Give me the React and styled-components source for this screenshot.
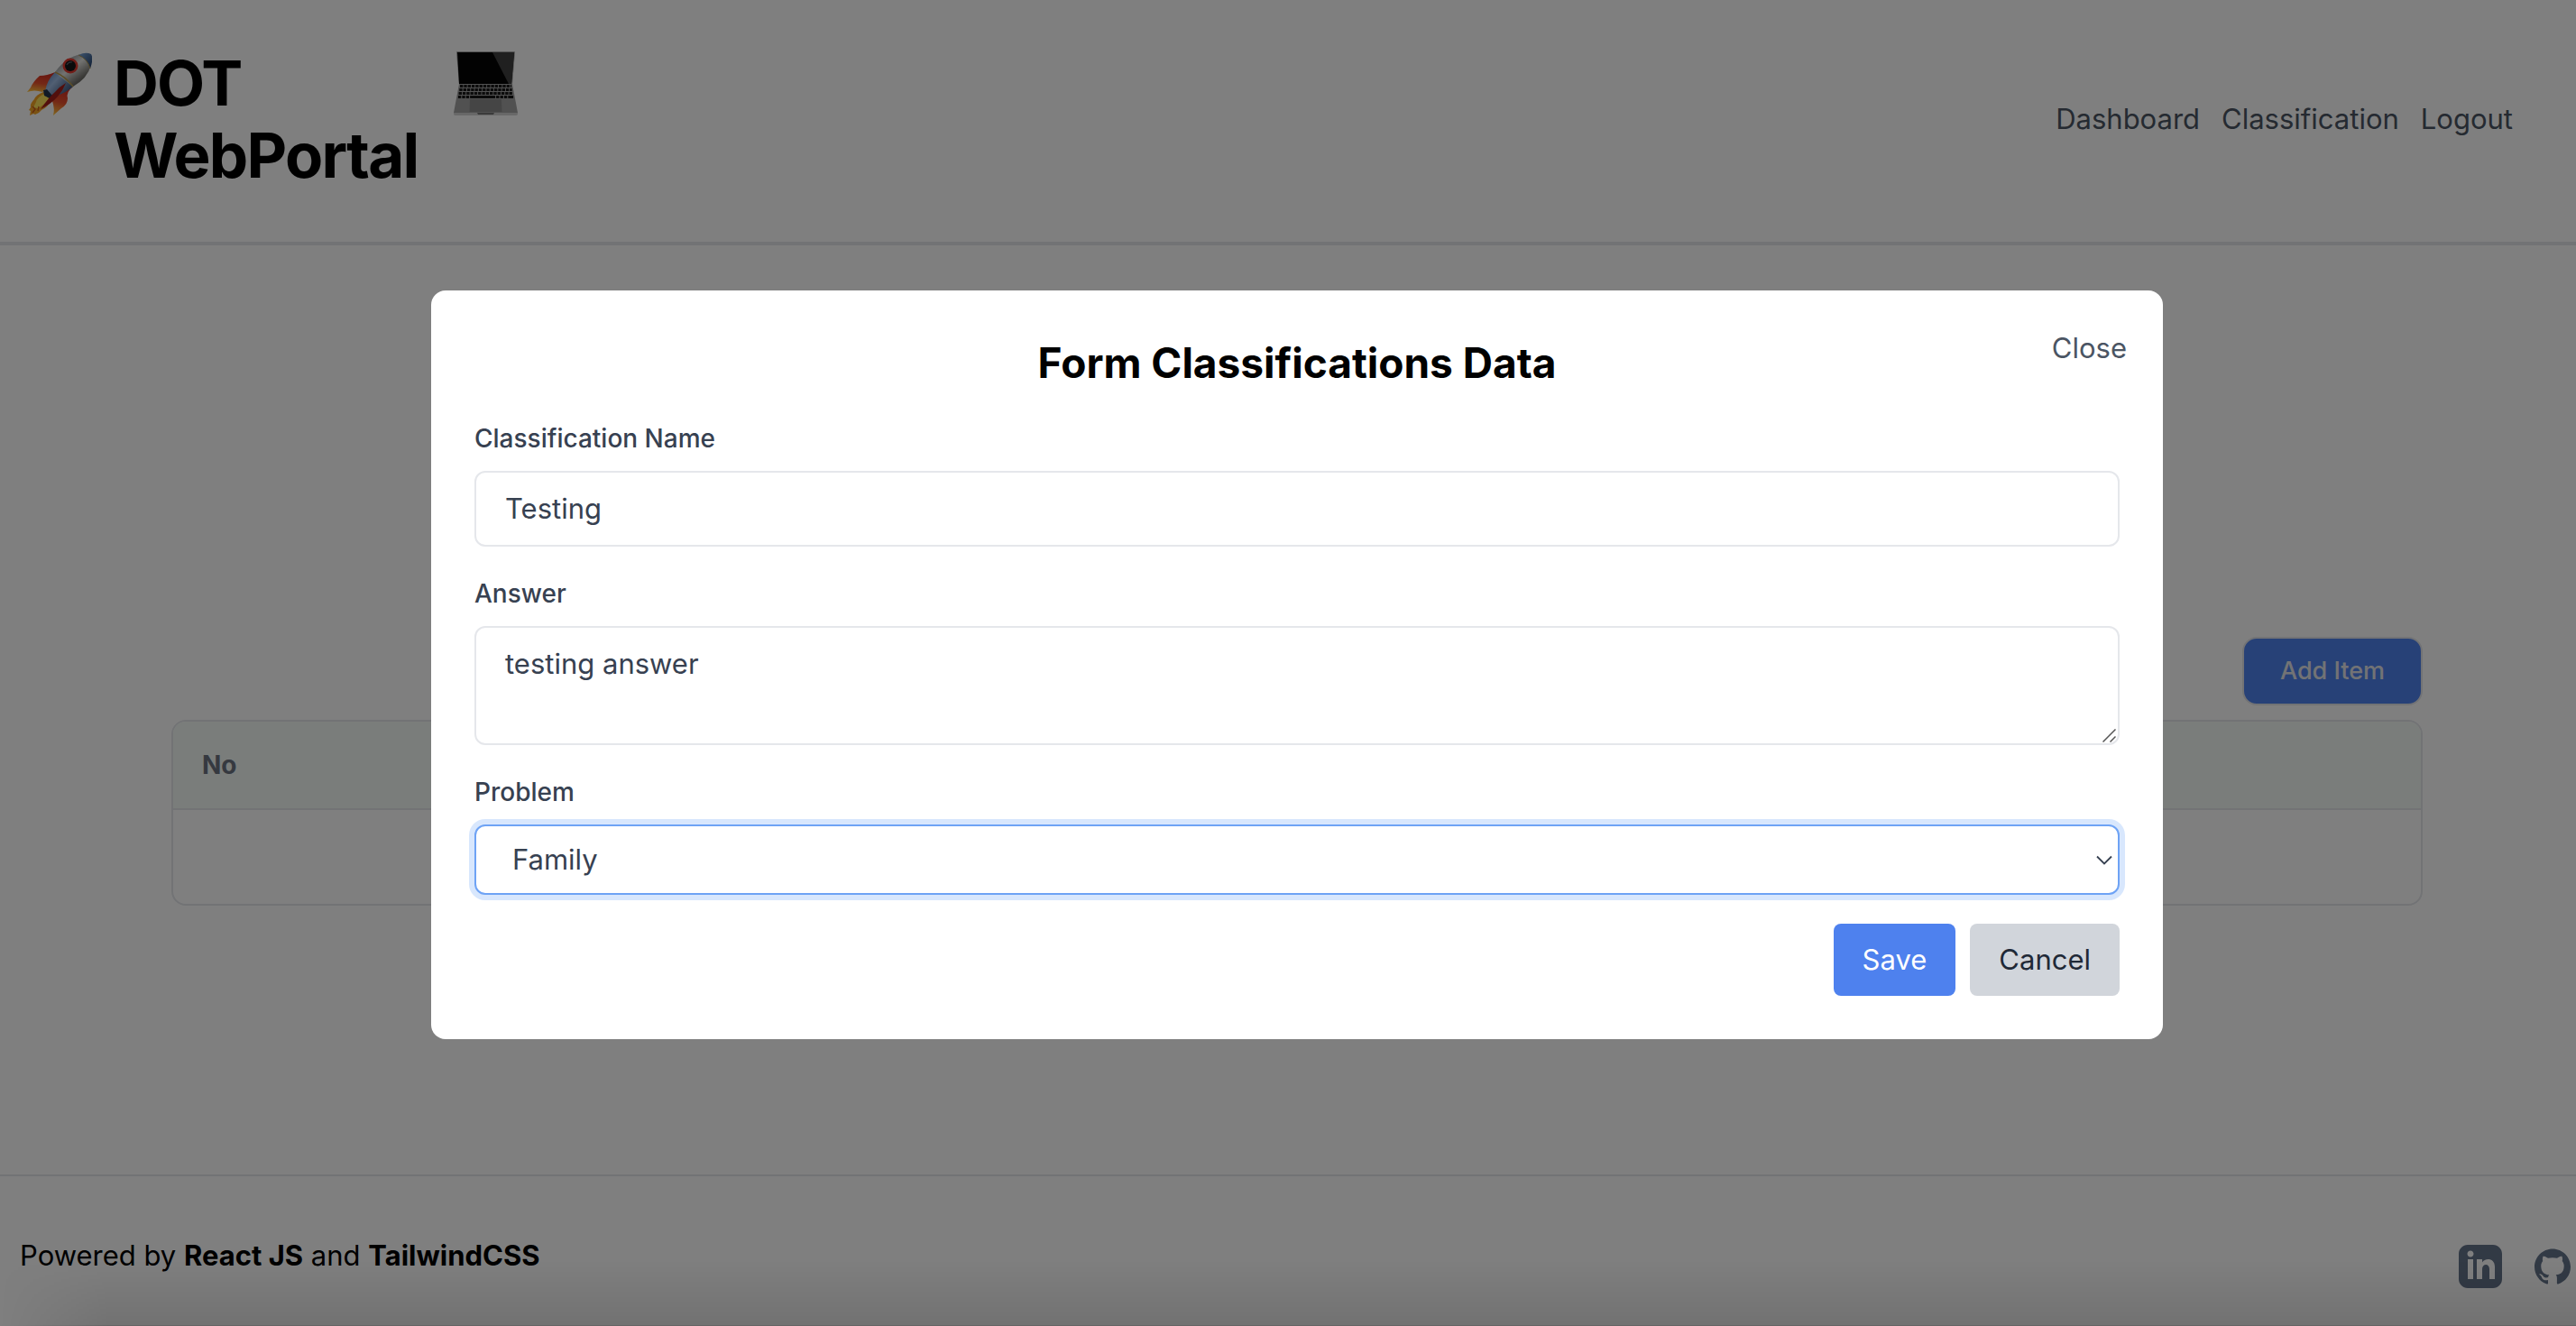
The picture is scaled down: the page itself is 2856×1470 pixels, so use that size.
import React from "react";
import styled, { createGlobalStyle } from "styled-components";

const GlobalStyle = createGlobalStyle`
  *, *::before, *::after { box-sizing: border-box; }
  body {
    margin: 0;
    background: #ffffff;
    color: #000000;
    font-family: Inter, "Liberation Sans", sans-serif;
    font-size: 31px;
    line-height: 48px;
  }
  h1, h2, p { margin: 0; }
  button, input, textarea, select { font: inherit; }
`;

const Page = styled.div`
  display: flex;
  flex-direction: column;
  min-height: 100vh;
`;

const Header = styled.header`
  display: flex;
  align-items: center;
  justify-content: space-between;
  padding: 52px 70px 56px 30px;
  border-bottom: 4px solid #e5e7eb;
`;

const Brand = styled.div`
  display: flex;
  align-items: flex-start;
`;

const BrandIcon = styled.svg`
  width: 72px;
  height: 72px;
  margin-top: 4px;
  flex: none;
`;

const BrandName = styled.h1`
  width: 400px;
  padding-left: 24px;
  font-size: 69px;
  font-weight: 700;
  line-height: 80px;
  letter-spacing: -0.025em;
`;

const Nav = styled.nav`
  display: flex;
  gap: 24px;
`;

const NavLink = styled.a`
  color: #4b5563;
  text-decoration: none;
`;

const Main = styled.main`
  display: flex;
  flex: 1;
  flex-direction: column;
  justify-content: center;
  padding: 0 170px 0 190px;
`;

const Section = styled.section`
  display: flex;
  flex-direction: column;
  gap: 16px;
  padding-top: 136px;
`;

const AddButton = styled.button`
  align-self: flex-end;
  padding: 16px 40px;
  border: 2px solid #e5e7eb;
  border-radius: 16px;
  background: #4f82ee;
  color: #e5e7eb;
  font-size: 27px;
  font-weight: 500;
  line-height: 40px;
`;

const TableFrame = styled.div`
  overflow: hidden;
  border: 2px solid #e5e7eb;
  border-radius: 16px;
`;

const Table = styled.table`
  width: 100%;
  border-collapse: separate;
  border-spacing: 0;
`;

const HeadCell = styled.th`
  padding: 28px 32px;
  border-bottom: 2px solid #e5e7eb;
  background: #f4faf7;
  color: #6b7280;
  font-size: 28px;
  font-weight: 700;
  line-height: 40px;
  text-align: left;
`;

const EmptyCell = styled.td`
  height: 104px;
`;

const Footer = styled.footer`
  display: flex;
  justify-content: space-between;
  align-items: flex-start;
  padding: 64px 0 42px 22px;
  border-top: 2px solid #e5e7eb;
`;

const Socials = styled.div`
  display: flex;
  align-items: center;
  gap: 36px;
  padding: 12px 6px 0 0;
`;

const SocialLink = styled.a`
  display: flex;
  color: #64748b;
`;

const SocialIcon = styled.svg`
  width: ${(p) => p.$size}px;
  height: ${(p) => p.$size}px;
  fill: currentColor;
`;

const Overlay = styled.div`
  position: fixed;
  inset: 0;
  display: flex;
  align-items: center;
  justify-content: center;
  padding: 4px 0 0 20px;
  background: rgba(0, 0, 0, 0.5);
`;

const EdgeShade = styled.div`
  position: fixed;
  inset: auto 0 0 0;
  height: 72px;
  border-bottom: 1px solid rgba(0, 0, 0, 0.2);
  background: linear-gradient(to bottom, rgba(0, 0, 0, 0), rgba(0, 0, 0, 0.1));
  mask-image: linear-gradient(to right, transparent, #000000 120px);
  pointer-events: none;
`;

const Dialog = styled.form`
  position: relative;
  display: flex;
  flex-direction: column;
  gap: 32px;
  width: 100%;
  max-width: 1920px;
  padding: 48px;
  border-radius: 16px;
  background: #ffffff;
`;

const DialogTitle = styled.h2`
  font-size: 46px;
  font-weight: 700;
  line-height: 64px;
  text-align: center;
`;

const CloseButton = styled.button`
  position: absolute;
  top: 40px;
  right: 40px;
  padding: 0;
  border: 0;
  background: none;
  color: #4b5563;
`;

const Field = styled.div`
  display: flex;
  flex-direction: column;
  gap: 16px;
`;

const Label = styled.label`
  color: #374151;
  font-size: 28px;
  font-weight: 500;
  line-height: 40px;
`;

const ControlBox = styled.div`
  position: relative;
  display: flex;
`;

const Input = styled.input`
  width: 100%;
  padding: 16px 32px;
  border: 2px solid #e5e7eb;
  border-radius: 12px;
  outline: 0;
  background: #ffffff;
  color: #374151;
  line-height: 48px;
`;

const TextArea = styled(Input)`
  display: block;
  resize: none;
`;

const Select = styled(Input)`
  appearance: none;
  height: 78px;
  padding: 0 40px;
  border-color: #6ea3f5;
  box-shadow: 0 0 0 6px #d8e7fd;
`;

const Grip = styled.svg`
  position: absolute;
  right: 4px;
  bottom: 3px;
  width: 15px;
  height: 15px;
  pointer-events: none;
`;

const Chevron = styled.svg`
  position: absolute;
  top: 34px;
  right: 8px;
  width: 18px;
  height: 12px;
  pointer-events: none;
`;

const Actions = styled.div`
  display: flex;
  justify-content: flex-end;
  gap: 16px;
`;

const ActionButton = styled.button`
  padding: 16px 32px;
  border: 0;
  border-radius: 8px;
  background: ${(p) => (p.$primary ? "#4e81ee" : "#d1d5db")};
  color: ${(p) => (p.$primary ? "#ffffff" : "#1f2937")};
`;

function Rocket() {
  return (
    <BrandIcon viewBox="0 0 72 72" aria-hidden="true">
      <defs>
        <linearGradient id="hull" x1="0.25" y1="0.15" x2="0.75" y2="0.75">
          <stop offset="0" stopColor="#8b9096" />
          <stop offset="0.45" stopColor="#e6e6e2" />
          <stop offset="1" stopColor="#6e6d68" />
        </linearGradient>
        <linearGradient id="tail" x1="0" y1="0" x2="1" y2="0.8">
          <stop offset="0" stopColor="#4a78b4" />
          <stop offset="0.4" stopColor="#a3bfe6" />
          <stop offset="1" stopColor="#2c4468" />
        </linearGradient>
        <linearGradient id="nose" x1="0" y1="0" x2="1" y2="1">
          <stop offset="0" stopColor="#7fa9dc" />
          <stop offset="1" stopColor="#1d3a66" />
        </linearGradient>
        <linearGradient id="fin" x1="0.5" y1="0" x2="0.3" y2="1">
          <stop offset="0" stopColor="#d02a20" />
          <stop offset="0.55" stopColor="#e8502c" />
          <stop offset="1" stopColor="#ffc13c" />
        </linearGradient>
      </defs>
      <path d="M31 24Q22 28 14 28Q7 34 4 41L0 46Q8 43 17 46L24 41Z" fill="url(#fin)" />
      <path d="M51 40Q43 46 45 53Q45 60 38 64L29 72Q31 65 28 56L33 49Z" fill="url(#fin)" />
      <path d="M18 46Q10 49 8 54Q3 59 4 63L2 66L4 67L3 72L7 70L9 71Q13 70 16 66Q23 63 26 56L27 50Z" fill="#f5a524" />
      <path d="M19 48Q11 52 10 57L7 63L12 64Q20 60 24 53Z" fill="#ffe25a" />
      <path d="M6 62L9 65L6 69M13 62L12 67" stroke="#c95a1c" strokeWidth="1.4" fill="none" />
      <path d="M31 24L51 40Q43 47 33 50Q27 53 20 45Q22 33 31 24Z" fill="url(#tail)" />
      <path d="M31 24Q43 7 60 4L71 16Q67 31 51 40Z" fill="url(#hull)" />
      <path d="M57 5Q65 1 71 4Q74 9 70 20Q68 10 57 5Z" fill="url(#nose)" />
      <path d="M31 24Q43 29 51 40" stroke="#b79b4f" strokeWidth="1.5" fill="none" />
      <path d="M57 5Q67 9 70 20" stroke="#ab914e" strokeWidth="1" fill="none" />
      <path d="M18 44L22 43L28 50L25 53L19 50Z" fill="#24334b" />
      <path d="M43 36Q36 40 31 46Q25 51 15 65Q27 59 34 51Q40 44 43 36Z" fill="#a51f1b" />
      <circle cx="48" cy="17" r="8.5" fill="#e23a30" />
      <circle cx="48" cy="17" r="6" fill="#151719" />
      <path d="M44 16Q46 12 50 13" stroke="#59616c" strokeWidth="1.2" fill="none" />
    </BrandIcon>
  );
}

function Laptop() {
  const rows = [38, 42, 46, 50];
  return (
    <BrandIcon viewBox="0 0 72 72" aria-hidden="true">
      <path d="M5 1H68Q69 1 69 2L66 38H7L4 2Q4 1 5 1Z" fill="#aaaaaa" />
      <path d="M5 2H68L65 37H7Z" fill="#050505" />
      <path d="M44 2H68L65 37H62Z" fill="#404040" />
      <path d="M7 37H66L72 69Q72 71 70 71H3Q1 71 1 69Z" fill="#a3a3a3" />
      <path d="M1 69H72V70Q72 72 70 72H3Q1 72 1 70Z" fill="#d0d0d0" />
      <path d="M27 69H46L45 71H28Z" fill="#777777" />
      {rows.map((y, i) => (
        <path
          key={y}
          d={`M${8 - i * 0.7} ${y + 1.5}H${65 + i * 0.7}`}
          stroke="#161616"
          strokeWidth="3"
          strokeDasharray={i === 3 ? "3.4 1 3.4 1 3.4 1 28 1" : "3.4 0.9"}
        />
      ))}
      <path d="M19 54H54L54.5 68H18.5Z" fill="#8b8b8b" />
    </BrandIcon>
  );
}

export default function App() {
  return (
    <>
      <GlobalStyle />
      <Page>
        <Header>
          <Brand>
            <Rocket />
            <BrandName>
              DOT
              <br />
              WebPortal
            </BrandName>
            <Laptop />
          </Brand>
          <Nav aria-label="Main">
            <NavLink href="#dashboard">Dashboard</NavLink>
            <NavLink href="#classification">Classification</NavLink>
            <NavLink href="#logout">Logout</NavLink>
          </Nav>
        </Header>

        <Main>
          <Section>
            <AddButton type="button">Add Item</AddButton>
            <TableFrame>
              <Table>
                <thead>
                  <tr>
                    <HeadCell scope="col">No</HeadCell>
                  </tr>
                </thead>
                <tbody>
                  <tr>
                    <EmptyCell />
                  </tr>
                </tbody>
              </Table>
            </TableFrame>
          </Section>
        </Main>

        <Footer>
          <p>
            Powered by <strong>React JS</strong> and <strong>TailwindCSS</strong>
          </p>
          <Socials>
            <SocialLink href="#linkedin" aria-label="LinkedIn">
              <SocialIcon $size={48} viewBox="0 0 24 24" aria-hidden="true">
                <path d="M19 0h-14c-2.761 0-5 2.239-5 5v14c0 2.761 2.239 5 5 5h14c2.762 0 5-2.239 5-5v-14c0-2.761-2.238-5-5-5zm-11 19h-3v-11h3v11zm-1.5-12.268c-.966 0-1.75-.79-1.75-1.764s.784-1.764 1.75-1.764 1.75.79 1.75 1.764-.783 1.764-1.75 1.764zm13.5 12.268h-3v-5.604c0-3.368-4-3.113-4 0v5.604h-3v-11h3v1.765c1.396-2.586 7-2.777 7 2.476v6.759z" />
              </SocialIcon>
            </SocialLink>
            <SocialLink href="#github" aria-label="GitHub">
              <SocialIcon $size={40} viewBox="0 0 24 24" aria-hidden="true">
                <path d="M12 .297c-6.63 0-12 5.373-12 12 0 5.303 3.438 9.8 8.205 11.385.6.113.82-.258.82-.577 0-.285-.01-1.04-.015-2.04-3.338.724-4.042-1.61-4.042-1.61C4.422 18.07 3.633 17.7 3.633 17.7c-1.087-.744.084-.729.084-.729 1.205.084 1.838 1.236 1.838 1.236 1.07 1.835 2.809 1.305 3.495.998.108-.776.417-1.305.76-1.605-2.665-.3-5.466-1.332-5.466-5.93 0-1.31.465-2.38 1.235-3.22-.135-.303-.54-1.523.105-3.176 0 0 1.005-.322 3.3 1.23.96-.267 1.98-.399 3-.405 1.02.006 2.04.138 3 .405 2.28-1.552 3.285-1.23 3.285-1.23.645 1.653.24 2.873.12 3.176.765.84 1.23 1.91 1.23 3.22 0 4.61-2.805 5.625-5.475 5.92.42.36.81 1.096.81 2.22 0 1.606-.015 2.896-.015 3.286 0 .315.21.69.825.57C20.565 22.092 24 17.592 24 12.297c0-6.627-5.373-12-12-12" />
              </SocialIcon>
            </SocialLink>
          </Socials>
        </Footer>
      </Page>

      <Overlay>
        <Dialog role="dialog" aria-modal="true" aria-labelledby="dialog-title">
          <DialogTitle id="dialog-title">Form Classifications Data</DialogTitle>
          <CloseButton type="button">Close</CloseButton>
          <Field>
            <Label htmlFor="name">Classification Name</Label>
            <Input id="name" type="text" defaultValue="Testing" />
          </Field>
          <Field>
            <Label htmlFor="answer">Answer</Label>
            <ControlBox>
              <TextArea as="textarea" id="answer" rows={2} defaultValue="testing answer" />
              <Grip viewBox="0 0 15 15" aria-hidden="true">
                <path d="M0.5 14.5L14.5 0.5M8.5 14.5L14.5 8.5" stroke="#555555" strokeWidth="1.5" />
              </Grip>
            </ControlBox>
          </Field>
          <Field>
            <Label htmlFor="problem">Problem</Label>
            <ControlBox>
              <Select as="select" id="problem" defaultValue="family">
                <option value="family">Family</option>
              </Select>
              <Chevron viewBox="0 0 18 12" aria-hidden="true">
                <path d="M1 1.5L9 9.5L17 1.5" fill="none" stroke="#374151" strokeWidth="1.8" />
              </Chevron>
            </ControlBox>
          </Field>
          <Actions>
            <ActionButton type="submit" $primary>
              Save
            </ActionButton>
            <ActionButton type="button">Cancel</ActionButton>
          </Actions>
        </Dialog>
      </Overlay>
      <EdgeShade />
    </>
  );
}
